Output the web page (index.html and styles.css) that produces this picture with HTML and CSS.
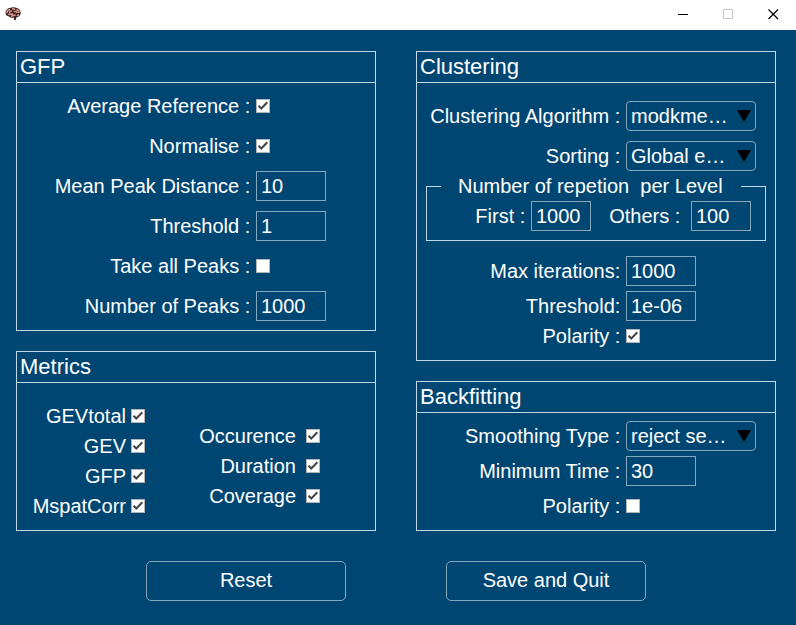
FILE: index.html
```html
<!DOCTYPE html>
<html lang="en">
<head>
<meta charset="utf-8">
<title>Settings</title>
<link rel="stylesheet" href="styles.css">
</head>
<body>
<svg class="defs" width="0" height="0">
  <symbol id="check" viewBox="0 0 14 14"><path d="M2.5 6.7 5.3 9.5 11.3 3.3" fill="none" stroke="#444" stroke-width="2"/></symbol>
  <symbol id="arrow" viewBox="0 0 14 12"><path d="M0 0H14L7 12Z" fill="#000"/></symbol>
</svg>
<header class="titlebar">
  <svg class="brain" width="16" height="14" viewBox="0 0 16 14">
    <path d="M0.5 6C0.5 3 2.5 1 5 1C7-0.2 10 0 12 1C14.5 1.8 16 4 15.6 7C15.3 9 13.5 10.2 11.5 10.2L10.6 13.5 9 12.5 8.5 10.6C6.5 11 5 10.5 4 9.4C2 9.3 0.5 8 0.5 6Z" fill="#3a2422"/>
    <path d="M2 6C2 4 3 2.8 5 2.5M5 6C3.8 4.5 6 3.5 7 4.2M7 2C8.5 1.4 9.5 2 10 3M11.5 2.5C13 3 14 4.4 13.8 6M3 7.6C4.5 6.6 6.5 8 8 6.6M9 5C10.5 3.8 12 4.6 11.8 6M6 9.2C8 8.6 9.5 9 10.5 7.5M12 8.7 14 7.8" fill="none" stroke="#dc9a8e" stroke-width="1.5"/>
  </svg>
  <div class="controls">
    <svg width="11" height="11"><path d="M0 5.5H10" stroke="#000"/></svg>
    <svg width="11" height="11"><path d="M.5 .5H9.5V9.5H.5Z" fill="none" stroke="#c4c4c4"/></svg>
    <svg width="11" height="11"><path d="M.5 .5 10 10M10 .5 .5 10" stroke="#000" stroke-width="1.2"/></svg>
  </div>
</header>
<main class="columns">
  <div class="column">
    <section class="panel gfp">
      <h2>GFP</h2>
      <div class="rows">
        <div class="row"><label>Average Reference :</label><span class="box"><svg><use href="#check"/></svg></span></div>
        <div class="row"><label>Normalise :</label><span class="box"><svg><use href="#check"/></svg></span></div>
        <div class="row"><label>Mean Peak Distance :</label><input value="10"></div>
        <div class="row"><label>Threshold :</label><input value="1"></div>
        <div class="row"><label>Take all Peaks :</label><span class="box"></span></div>
        <div class="row"><label>Number of Peaks :</label><input value="1000"></div>
      </div>
    </section>
    <section class="panel metrics">
      <h2>Metrics</h2>
      <div class="metric-groups">
        <div class="primary">
          <div class="row"><label>GEVtotal</label><span class="box"><svg><use href="#check"/></svg></span></div>
          <div class="row"><label>GEV</label><span class="box"><svg><use href="#check"/></svg></span></div>
          <div class="row"><label>GFP</label><span class="box"><svg><use href="#check"/></svg></span></div>
          <div class="row"><label>MspatCorr</label><span class="box"><svg><use href="#check"/></svg></span></div>
        </div>
        <div class="temporal">
          <div class="row"><label>Occurence</label><span class="box"><svg><use href="#check"/></svg></span></div>
          <div class="row"><label>Duration</label><span class="box"><svg><use href="#check"/></svg></span></div>
          <div class="row"><label>Coverage</label><span class="box"><svg><use href="#check"/></svg></span></div>
        </div>
      </div>
    </section>
  </div>
  <div class="column">
    <section class="panel clustering">
      <h2>Clustering</h2>
      <div class="selects">
        <div class="row"><label>Clustering Algorithm :</label><div class="select"><span>modkme…</span><svg><use href="#arrow"/></svg></div></div>
        <div class="row"><label>Sorting :</label><div class="select"><span>Global e…</span><svg><use href="#arrow"/></svg></div></div>
      </div>
      <fieldset>
        <legend>Number of repetion  per Level</legend>
        <div class="levels">
          <label class="first">First :</label><input value="1000">
          <label class="others">Others :</label><input value="100">
        </div>
      </fieldset>
      <div class="limits">
        <div class="row"><label>Max iterations:</label><input value="1000"></div>
        <div class="row"><label>Threshold:</label><input value="1e-06"></div>
        <div class="row polarity"><label>Polarity :</label><span class="box"><svg><use href="#check"/></svg></span></div>
      </div>
    </section>
    <section class="panel backfitting">
      <h2>Backfitting</h2>
      <div class="rows">
        <div class="row"><label>Smoothing Type :</label><div class="select"><span>reject se…</span><svg><use href="#arrow"/></svg></div></div>
        <div class="row"><label>Minimum Time :</label><input value="30"></div>
        <div class="row"><label>Polarity :</label><span class="box"></span></div>
      </div>
    </section>
  </div>
</main>
<footer class="actions">
  <button>Reset</button>
  <button>Save and Quit</button>
</footer>
</body>
</html>
```
FILE: styles.css
```css
* { box-sizing: border-box; }
body {
  margin: 0;
  height: 625px;
  overflow: hidden;
  background: #004673;
  color: #fff;
  font: 20px/30px "Liberation Sans", Arial, sans-serif;
}
.defs { display: none; }
.titlebar {
  height: 30px;
  padding: 0 17px 0 5px;
  background: #fff;
  display: flex;
  align-items: center;
  justify-content: space-between;
}
.titlebar svg { display: block; }
.controls { display: flex; gap: 34px; padding-bottom: 1px; }
.brain { margin-bottom: 2px; }

.columns { display: flex; gap: 40px; padding: 21px 0 0 16px; }
.column { display: flex; flex-direction: column; gap: 20px; }
.panel { width: 360px; border: 1px solid #bfd9e8; }
.gfp { height: 280px; }
.metrics { height: 180px; }
.clustering { height: 310px; }
.backfitting { height: 150px; }
h2 {
  margin: 0;
  height: 31px;
  padding-left: 3px;
  border-bottom: 1px solid #bfd9e8;
  font-size: 22px;
  font-weight: normal;
  line-height: 30px;
}

.row { display: flex; align-items: center; gap: 5px; height: 30px; }
.row label { width: 234px; padding-right: 0.7px; text-align: right; white-space: pre; }
input {
  width: 70px;
  height: 30px;
  margin: 0;
  padding: 0 4px;
  border: 1px solid #86a8bd;
  border-radius: 0;
  background: transparent;
  color: inherit;
  font: inherit;
}
.box { width: 14px; height: 14px; border: 1px solid #b4b4b4; background: #fff; }
.box svg { display: block; width: 14px; height: 14px; margin: -1px; }
.select {
  width: 130px;
  height: 30px;
  padding: 0 4px;
  border: 1px solid #86a8bd;
  border-radius: 4px;
  display: flex;
  align-items: center;
  justify-content: space-between;
}
.select svg { width: 14px; height: 12px; }

.gfp .rows { padding-top: 3px; }
.gfp .row { height: 40px; }

.metric-groups { display: flex; padding-top: 18px; }
.metric-groups .row label { padding-right: 0; }
.primary .row label { width: 109px; }
.temporal { padding-top: 20px; }
.temporal .row { gap: 10px; }
.temporal .row label { width: 151px; }

.clustering .row label, .backfitting .row label { width: 204px; }
.selects { display: grid; gap: 10px; padding-top: 18px; }
fieldset {
  width: 340px;
  height: 70px;
  margin: 0 0 15px 9px;
  padding: 0;
  border: 1px solid #bfd9e8;
}
legend { width: 300px; height: 30px; margin-left: 14px; padding: 0 0 0 17px; text-align: left; white-space: pre; }
.levels { display: flex; }
.levels input { width: 60px; }
.first { width: 99px; padding-right: 0.7px; margin-right: 5px; text-align: right; }
.others { width: 90px; padding-right: 0.7px; margin-right: 10px; text-align: right; }
.limits { display: grid; gap: 5px; }
.polarity { margin-top: -5px; }

.backfitting .rows { display: grid; gap: 5px; padding-top: 8px; }

.actions { display: flex; gap: 100px; padding: 30px 0 0 146px; }
button {
  width: 200px;
  height: 40px;
  padding: 0 0 2px;
  border: 1px solid #86a8bd;
  border-radius: 5px;
  background: transparent;
  color: inherit;
  font: inherit;
}
```
